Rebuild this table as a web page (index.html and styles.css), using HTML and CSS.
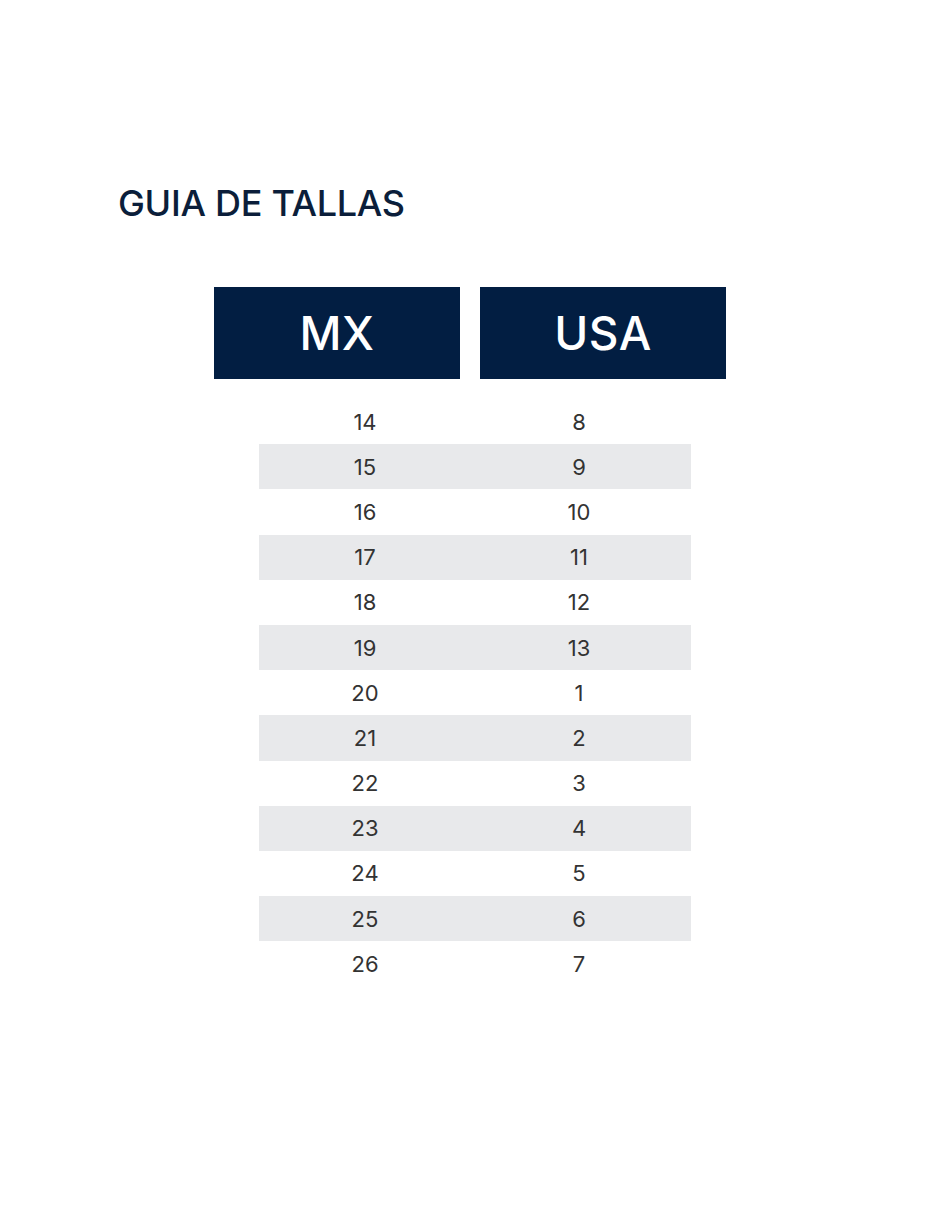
FILE: index.html
```html
<!DOCTYPE html>
<html lang="es">
<head>
<meta charset="utf-8">
<title>Guia de tallas</title>
<link rel="stylesheet" href="styles.css">
</head>
<body>
<main class="page">
  <h1 class="title">GUIA DE TALLAS</h1>
  <div class="heads">
    <div class="head">MX</div>
    <div class="head">USA</div>
  </div>
  <div class="rows">
    <div class="row"><span>14</span><span>8</span></div>
    <div class="row alt"><span>15</span><span>9</span></div>
    <div class="row"><span>16</span><span>10</span></div>
    <div class="row alt"><span>17</span><span>11</span></div>
    <div class="row"><span>18</span><span>12</span></div>
    <div class="row alt"><span>19</span><span>13</span></div>
    <div class="row"><span>20</span><span>1</span></div>
    <div class="row alt"><span>21</span><span>2</span></div>
    <div class="row"><span>22</span><span>3</span></div>
    <div class="row alt"><span>23</span><span>4</span></div>
    <div class="row"><span>24</span><span>5</span></div>
    <div class="row alt"><span>25</span><span>6</span></div>
    <div class="row"><span>26</span><span>7</span></div>
  </div>
</main>
</body>
</html>
```
FILE: styles.css
```css
html, body {
  margin: 0;
  padding: 0;
  background: #ffffff;
}
body {
  font-family: Inter, "DejaVu Sans", sans-serif;
  width: 940px;
  height: 1215px;
  overflow: hidden;
}
.page {
  display: flex;
  flex-direction: column;
  padding-top: 180px;
}
.title {
  margin: 0 0 0 118px;
  font-size: 36px;
  line-height: 46px;
  font-weight: 500;
  color: #0b1e3a;
  letter-spacing: -0.3px;
}
.heads {
  display: flex;
  gap: 20px;
  margin-top: 61px;
  margin-left: 214px;
}
.head {
  width: 246px;
  height: 92px;
  background: #021e42;
  color: #ffffff;
  display: flex;
  align-items: center;
  justify-content: center;
  font-size: 46px;
  font-weight: 500;
  letter-spacing: 0.5px;
}
.rows {
  display: flex;
  flex-direction: column;
  margin-left: 259px;
  margin-top: 20px;
  width: 432px;
}
.row {
  display: grid;
  grid-template-columns: 1fr 1fr;
  height: 45.2px;
  align-items: center;
  font-size: 22px;
  color: #333333;
}
.row span {
  text-align: center;
}
.row span:first-child {
  padding-right: 4px;
}
.row span:last-child {
  padding-right: 8px;
}
.alt {
  background: #e8e9eb;
}
```
